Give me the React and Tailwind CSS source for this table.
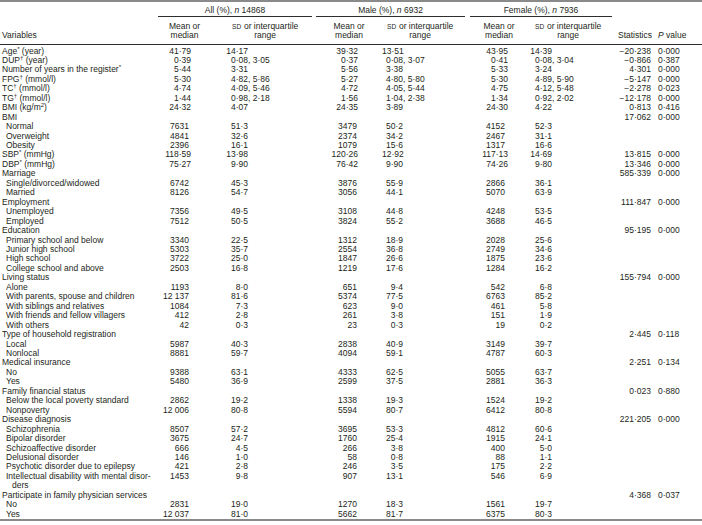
import React from "react";

// Table 1 – demographic and clinical characteristics by sex
const S = ({ children }) => <sup className="text-[6px]">{children}</sup>;
const Sd = () => <span className="text-[6.6px] tracking-[0.2px]">SD</span>;

const rows = [
  { label: <>Age<S>*</S> (year)</>, t: "m", v: ["41·79", "14·17", "39·32", "13·51", "43·95", "14·39"], s: "−20·238", p: "0·000" },
  { label: <>DUP<S>†</S> (year)</>, t: "m", v: ["0·39", "0·08, 3·05", "0·37", "0·08, 3·07", "0·41", "0·08, 3·04"], s: "−0·866", p: "0·387" },
  { label: <>Number of years in the register<S>*</S></>, t: "m", v: ["5·44", "3·31", "5·56", "3·38", "5·33", "3·24"], s: "4·301", p: "0·000" },
  { label: <>FPG<S>†</S> (mmol/l)</>, t: "m", v: ["5·30", "4·82, 5·86", "5·27", "4·80, 5·80", "5·30", "4·89, 5·90"], s: "−5·147", p: "0·000" },
  { label: <>TC<S>†</S> (mmol/l)</>, t: "m", v: ["4·74", "4·09, 5·46", "4·72", "4·05, 5·44", "4·75", "4·12, 5·48"], s: "−2·278", p: "0·023" },
  { label: <>TG<S>†</S> (mmol/l)</>, t: "m", v: ["1·44", "0·98, 2·18", "1·56", "1·04, 2·38", "1·34", "0·92, 2·02"], s: "−12·178", p: "0·000" },
  { label: <>BMI (kg/m<S>2</S>)</>, t: "m", v: ["24·32", "4·07", "24·35", "3·89", "24·30", "4·22"], s: "0·813", p: "0·416" },
  { label: "BMI", s: "17·062", p: "0·000" },
  { label: "Normal", sub: true, t: "c", v: ["7631", "51·3", "3479", "50·2", "4152", "52·3"] },
  { label: "Overweight", sub: true, t: "c", v: ["4841", "32·6", "2374", "34·2", "2467", "31·1"] },
  { label: "Obesity", sub: true, t: "c", v: ["2396", "16·1", "1079", "15·6", "1317", "16·6"] },
  { label: <>SBP<S>*</S> (mmHg)</>, t: "m", v: ["118·59", "13·98", "120·26", "12·92", "117·13", "14·69"], s: "13·815", p: "0·000" },
  { label: <>DBP<S>*</S> (mmHg)</>, t: "m", v: ["75·27", "9·90", "76·42", "9·90", "74·26", "9·80"], s: "13·346", p: "0·000" },
  { label: "Marriage", s: "585·339", p: "0·000" },
  { label: "Single/divorced/widowed", sub: true, t: "c", v: ["6742", "45·3", "3876", "55·9", "2866", "36·1"] },
  { label: "Married", sub: true, t: "c", v: ["8126", "54·7", "3056", "44·1", "5070", "63·9"] },
  { label: "Employment", s: "111·847", p: "0·000" },
  { label: "Unemployed", sub: true, t: "c", v: ["7356", "49·5", "3108", "44·8", "4248", "53·5"] },
  { label: "Employed", sub: true, t: "c", v: ["7512", "50·5", "3824", "55·2", "3688", "46·5"] },
  { label: "Education", s: "95·195", p: "0·000" },
  { label: "Primary school and below", sub: true, t: "c", v: ["3340", "22·5", "1312", "18·9", "2028", "25·6"] },
  { label: "Junior high school", sub: true, t: "c", v: ["5303", "35·7", "2554", "36·8", "2749", "34·6"] },
  { label: "High school", sub: true, t: "c", v: ["3722", "25·0", "1847", "26·6", "1875", "23·6"] },
  { label: "College school and above", sub: true, t: "c", v: ["2503", "16·8", "1219", "17·6", "1284", "16·2"] },
  { label: "Living status", s: "155·794", p: "0·000" },
  { label: "Alone", sub: true, t: "c", v: ["1193", "8·0", "651", "9·4", "542", "6·8"] },
  { label: "With parents, spouse and children", sub: true, t: "c", v: ["12 137", "81·6", "5374", "77·5", "6763", "85·2"] },
  { label: "With siblings and relatives", sub: true, t: "c", v: ["1084", "7·3", "623", "9·0", "461", "5·8"] },
  { label: "With friends and fellow villagers", sub: true, t: "c", v: ["412", "2·8", "261", "3·8", "151", "1·9"] },
  { label: "With others", sub: true, t: "c", v: ["42", "0·3", "23", "0·3", "19", "0·2"] },
  { label: "Type of household registration", s: "2·445", p: "0·118" },
  { label: "Local", sub: true, t: "c", v: ["5987", "40·3", "2838", "40·9", "3149", "39·7"] },
  { label: "Nonlocal", sub: true, t: "c", v: ["8881", "59·7", "4094", "59·1", "4787", "60·3"] },
  { label: "Medical insurance", s: "2·251", p: "0·134" },
  { label: "No", sub: true, t: "c", v: ["9388", "63·1", "4333", "62·5", "5055", "63·7"] },
  { label: "Yes", sub: true, t: "c", v: ["5480", "36·9", "2599", "37·5", "2881", "36·3"] },
  { label: "Family financial status", s: "0·023", p: "0·880" },
  { label: "Below the local poverty standard", sub: true, t: "c", v: ["2862", "19·2", "1338", "19·3", "1524", "19·2"] },
  { label: "Nonpoverty", sub: true, t: "c", v: ["12 006", "80·8", "5594", "80·7", "6412", "80·8"] },
  { label: "Disease diagnosis", s: "221·205", p: "0·000" },
  { label: "Schizophrenia", sub: true, t: "c", v: ["8507", "57·2", "3695", "53·3", "4812", "60·6"] },
  { label: "Bipolar disorder", sub: true, t: "c", v: ["3675", "24·7", "1760", "25·4", "1915", "24·1"] },
  { label: "Schizoaffective disorder", sub: true, t: "c", v: ["666", "4·5", "266", "3·8", "400", "5·0"] },
  { label: "Delusional disorder", sub: true, t: "c", v: ["146", "1·0", "58", "0·8", "88", "1·1"] },
  { label: "Psychotic disorder due to epilepsy", sub: true, t: "c", v: ["421", "2·8", "246", "3·5", "175", "2·2"] },
  {
    label: (
      <>
        Intellectual disability with mental disor-
        <div className="pl-[6px]">ders</div>
      </>
    ),
    sub: true,
    t: "c",
    v: ["1453", "9·8", "907", "13·1", "546", "6·9"],
  },
  { label: "Participate in family physician services", s: "4·368", p: "0·037" },
  { label: "No", sub: true, t: "c", v: ["2831", "19·0", "1270", "18·3", "1561", "19·7"] },
  { label: "Yes", sub: true, t: "c", v: ["12 037", "81·0", "5662", "81·7", "6375", "80·3"] },
];

// "0·08, 3·05" -> ["0·08", ", 3·05"]; the first number is aligned, the rest trails
const split = (x) => {
  if (!x) return ["", ""];
  const [a, b] = x.split(", ");
  return [a, b ? ", " + b : ""];
};

function Row({ r }) {
  const v = r.v || [];
  const count = r.t === "c";
  const [a1, a2] = split(v[1]);
  const [m1, m2] = split(v[3]);
  const [f1, f2] = split(v[5]);
  return (
    <div className="flex items-start leading-[9.46px]">
      <div className={`w-[158px] shrink-0 ${r.sub ? "pl-[6px]" : "pl-[2px]"}`}>{r.label}</div>
      <div className={`w-[53px] shrink-0 text-right ${count ? "pr-[22px]" : "pr-[20px]"}`}>{v[0]}</div>
      <div className="w-[37px] shrink-0 text-right">{a1}</div>
      <div className="w-[64px] shrink-0 whitespace-pre">{a2}</div>
      <div className="w-[4px] shrink-0" />
      <div className={`w-[66px] shrink-0 text-right ${count ? "pr-[25px]" : "pr-[24px]"}`}>{v[2]}</div>
      <div className="w-[21px] shrink-0 text-right">{m1}</div>
      <div className="w-[62px] shrink-0 whitespace-pre">{m2}</div>
      <div className="w-[5px] shrink-0" />
      <div className={`w-[58px] shrink-0 text-right ${count ? "pr-[23px]" : "pr-[20px]"}`}>{v[4]}</div>
      <div className="w-[24px] shrink-0 text-right">{f1}</div>
      <div className="w-[60px] shrink-0 whitespace-pre">{f2}</div>
      <div className="w-[43px] shrink-0 text-right pr-[4px]">{r.s}</div>
      <div className="pl-[3px]">{r.p}</div>
    </div>
  );
}

function SdHead() {
  return (
    <div className="inline-block text-center">
      <Sd /> or interquartile
      <br />
      range
    </div>
  );
}

export default function App() {
  return (
    <div className="w-[702px] h-[525px] bg-white text-[#231f20] text-[8.5px] font-['Liberation_Sans',Arial,sans-serif]">
      <div className="border-t-2 border-[#8a8a8a] pt-[4px]">
        {/* group headings */}
        <div className="flex leading-[9px]">
          <div className="w-[158px] shrink-0" />
          <div className="w-[154px] shrink-0 text-center pb-[1px] border-b border-[#2e2e2e]">
            All (%), <i>n</i> 14868
          </div>
          <div className="w-[4px] shrink-0" />
          <div className="w-[149px] shrink-0 text-center pb-[1px] border-b border-[#2e2e2e]">
            Male (%), <i>n</i> 6932
          </div>
          <div className="w-[5px] shrink-0" />
          <div className="w-[142px] shrink-0 text-center pb-[1px] border-b border-[#2e2e2e]">
            Female (%), <i>n</i> 7936
          </div>
        </div>

        {/* column headings */}
        <div className="flex items-end leading-[9px] mt-[5px] pb-[4px] border-b border-[#2e2e2e]">
          <div className="w-[158px] shrink-0 pl-[2px]">Variables</div>
          <div className="w-[53px] shrink-0 text-center">
            Mean or
            <br />
            median
          </div>
          <div className="w-[101px] shrink-0 pl-[21px]">
            <SdHead />
          </div>
          <div className="w-[4px] shrink-0" />
          <div className="w-[66px] shrink-0 text-center">
            Mean or
            <br />
            median
          </div>
          <div className="w-[83px] shrink-0 pl-[5px]">
            <SdHead />
          </div>
          <div className="w-[5px] shrink-0" />
          <div className="w-[58px] shrink-0 text-center">
            Mean or
            <br />
            median
          </div>
          <div className="w-[84px] shrink-0 pl-[7px]">
            <SdHead />
          </div>
          <div className="w-[43px] shrink-0 text-right pr-[3px]">Statistics</div>
          <div className="pl-[3px]">
            <i>P</i> value
          </div>
        </div>

        <div className="pt-[1.5px] border-b-2 border-[#8a8a8a]">
          {rows.map((r, i) => (
            <Row key={i} r={r} />
          ))}
        </div>
      </div>
    </div>
  );
}
